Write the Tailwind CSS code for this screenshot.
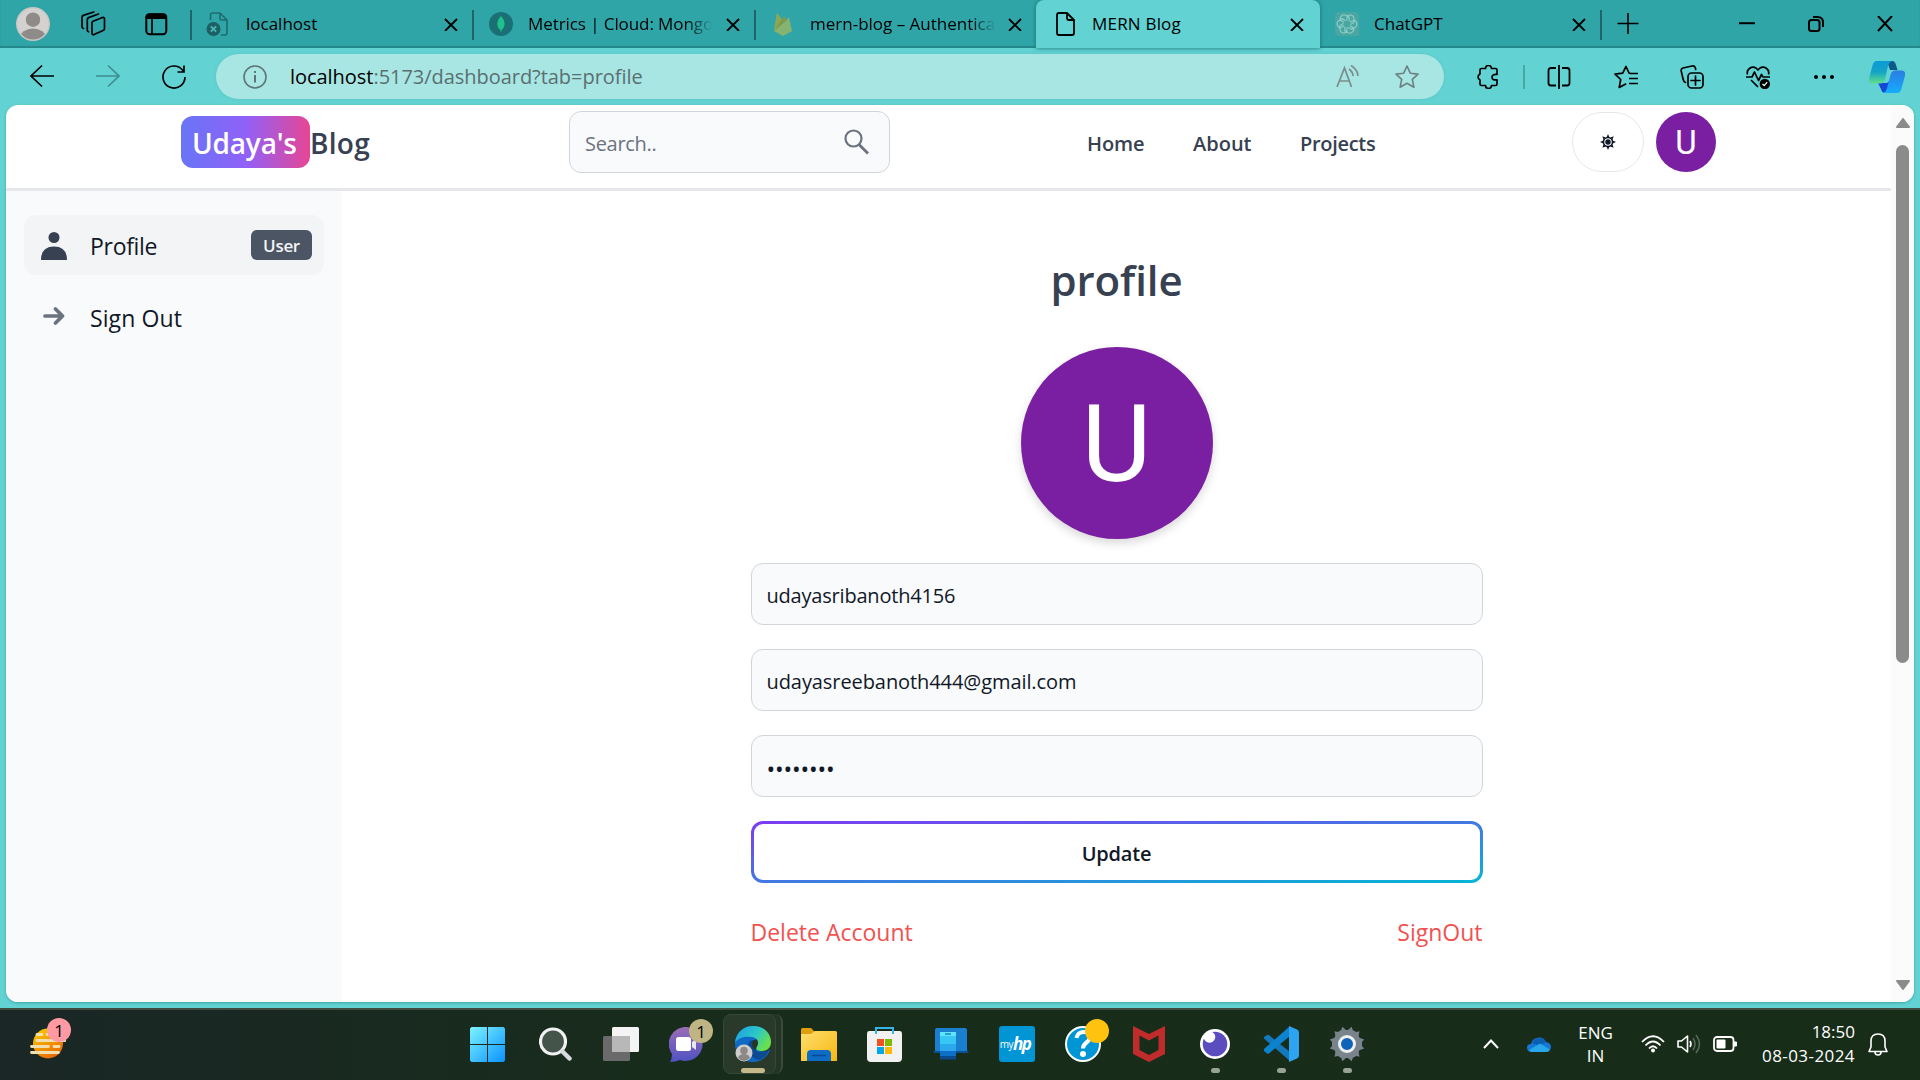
<!DOCTYPE html>
<html lang="en">
<head>
<meta charset="utf-8">
<title>MERN Blog</title>
<script src="https://cdn.jsdelivr.net/npm/@tailwindcss/browser@4"></script>
</head>
<body class="w-[1920px] h-[1080px] overflow-hidden flex flex-col bg-[#62d2d2] font-['Open_Sans',sans-serif] text-black">

<!-- Tab strip -->
<header class="relative h-12 shrink-0 flex items-center bg-[#30a5a8] shadow-[inset_0_-2px_1px_#25888b]">
  <div class="w-[191px] flex items-center pl-4">
    <svg class="w-[34px] h-[34px]" viewBox="0 0 34 34"><defs><clipPath id="av"><circle cx="17" cy="17" r="15.5"/></clipPath></defs><circle cx="17" cy="17" r="17" fill="#c9c7c5"/><circle cx="17" cy="17" r="15.5" fill="#d4d2d0"/><g clip-path="url(#av)" fill="#8e8b88"><circle cx="17" cy="12.7" r="7.2"/><ellipse cx="17" cy="31" rx="13" ry="9.5"/></g></svg>
    <svg class="w-[26px] h-[26px] ml-[30px]" viewBox="0 0 26 26" fill="none" stroke="#000" stroke-width="1.7" stroke-linejoin="round" stroke-linecap="round"><path d="M13 10.300 22.500 6.500c1.200-.4 2 .2 2 1.300v9.700c0 1-.5 1.600-1.400 2L14 23.600c-1.200.4-2-.2-2-1.300V11.800c0-.8.300-1.200 1-1.500Z"/><path d="M8.500 20.800c-.8-.2-1.200-.8-1.200-1.700V8.500c0-1 .4-1.500 1.300-1.900L18.500 3"/><path d="M3.400 17.500C2.500 17.200 2 16.600 2 15.700V6.300c0-1 .4-1.500 1.300-1.900L13.800 1"/></svg>
    <svg class="w-[24px] h-[24px] ml-[38px]" viewBox="0 0 24 24"><rect x="2.300" y="2.300" width="20" height="20" rx="3.500" fill="none" stroke="#000" stroke-width="2"/><path d="M1.500 7V5Q1.500 1.500 5 1.500h14.500q3.500 0 3.500 3.500v2Z"/><path d="M8 7v15" stroke="#000" stroke-width="1.700"/></svg>
  </div>

  <div class="w-[282px] h-full flex items-center relative">
    <i class="absolute left-[-1px] top-2.5 w-0.5 h-[30px] bg-[#1d6568]"></i>
    <svg class="w-6 h-6 ml-[15px]" viewBox="0 0 24 24" fill="none" stroke="#1c6c6e" stroke-width="1.6" stroke-linejoin="round"><path d="M4.500 8V3q0-2 2-2H14l7 7v13q0 2-2 2h-4M14 1v5q0 2 2 2h5"/><circle cx="7.500" cy="17" r="7" fill="#1c6063" stroke="none"/><path d="m4.800 14.300 5.400 5.400m0-5.400-5.400 5.400" stroke="#4cb8ba" stroke-width="1.800"/></svg>
    <span class="ml-4 w-[182px] overflow-hidden whitespace-nowrap text-[17px]">localhost</span>
    <svg class="w-3.5 h-3.5 ml-[16px]" viewBox="0 0 14 14"><path d="m1 2 12 12M13 2 1 14" stroke="#000" stroke-width="1.800"/></svg>
  </div>
  <div class="w-[282px] h-full flex items-center relative">
    <i class="absolute left-[-1px] top-2.5 w-0.5 h-[30px] bg-[#1d6568]"></i>
    <svg class="w-6 h-6 ml-4" viewBox="0 0 24 24"><circle cx="12" cy="12" r="12" fill="#1b7076"/><path d="M12 4c4.500 5 5 10.500.4 14.300V20h-.8v-1.700C7 14.500 7.500 9 12 4Z" fill="#1fc28a"/></svg>
    <span class="ml-[15px] w-[184px] overflow-hidden whitespace-nowrap text-[17px] tracking-[-.08px] mask-r-from-86% mask-r-to-100%">Metrics | Cloud: Mongo</span>
    <svg class="w-3.5 h-3.5 ml-[14px]" viewBox="0 0 14 14"><path d="m1 2 12 12M13 2 1 14" stroke="#000" stroke-width="1.800"/></svg>
  </div>
  <div class="w-[282px] h-full flex items-center relative">
    <i class="absolute left-[-1px] top-2.5 w-0.5 h-[30px] bg-[#1d6568]"></i>
    <svg class="w-6 h-6 ml-4" viewBox="0 0 24 24"><path d="M3 19 6 1l5 7 2-4 2 4 3-2.500L21 19l-9 5Z" fill="#86b36f"/><path d="M3 19 6 1l4.500 8Z" fill="#8ea551"/><path d="M3 19 13 4l2.500 4.500Z" fill="#7a9a50"/></svg>
    <span class="ml-[15px] w-[186px] overflow-hidden whitespace-nowrap text-[17px] mask-r-from-86% mask-r-to-100%">mern-blog – Authentica</span>
    <svg class="w-3.5 h-3.5 ml-[12px]" viewBox="0 0 14 14"><path d="m1 2 12 12M13 2 1 14" stroke="#000" stroke-width="1.800"/></svg>
  </div>
  <div class="w-[284px] -ml-px h-full flex items-center bg-[#62d2d2] rounded-t-lg shadow-[0_0_4px_#176d70]">
    <svg class="w-6 h-6 ml-[17px]" viewBox="0 0 24 24" fill="none" stroke="#000" stroke-width="1.800" stroke-linejoin="round"><path d="M14 1H6Q4 1 4 3v18q0 2 2 2h13q2 0 2-2V8ZM14 1v5q0 2 2 2h5"/></svg>
    <span class="ml-[15px] w-[182px] overflow-hidden whitespace-nowrap text-[17px] tracking-[.2px]">MERN Blog</span>
    <svg class="w-3.5 h-3.5 ml-[16px]" viewBox="0 0 14 14"><path d="m1 2 12 12M13 2 1 14" stroke="#000" stroke-width="1.800"/></svg>
  </div>
  <div class="w-[281px] h-full flex items-center">
    <svg class="w-6 h-6 ml-[15px]" viewBox="0 0 24 24"><path d="M4 0h16q4 0 4 4v20H4q-4 0-4-4V4q0-4 4-4Z" fill="#4aa6a0"/><g fill="none" stroke="#8fcfcd" stroke-width="1.100"><path id="pt" d="M12 8.500V6q0-3 3-3 3.500 0 4 3.500v4l-3.500 2"/><use href="#pt" transform="rotate(60 12 12)"/><use href="#pt" transform="rotate(120 12 12)"/><use href="#pt" transform="rotate(180 12 12)"/><use href="#pt" transform="rotate(240 12 12)"/><use href="#pt" transform="rotate(300 12 12)"/></g></svg>
    <span class="ml-[15px] w-[182px] overflow-hidden whitespace-nowrap text-[17px]">ChatGPT</span>
    <svg class="w-3.5 h-3.5 ml-[16px]" viewBox="0 0 14 14"><path d="m1 2 12 12M13 2 1 14" stroke="#000" stroke-width="1.800"/></svg>
  </div>
  <div class="relative flex-1 h-full flex items-center">
    <i class="absolute left-[-1px] top-2.5 w-0.5 h-[30px] bg-[#1d6568]"></i>
    <svg class="w-[22px] h-[22px] ml-[16px]" viewBox="0 0 22 22"><path d="M11 0v21M.5 10.500h21" stroke="#000" stroke-width="1.600"/></svg>
    <svg class="w-4 h-4 ml-[100px]" viewBox="0 0 16 16"><path d="M0 7.200h16" stroke="#000" stroke-width="2"/></svg>
    <svg class="w-4 h-4 ml-[53px]" viewBox="0 0 16 16" fill="none" stroke="#000" stroke-width="2"><rect x="1" y="4" width="10.500" height="11" rx="2.500"/><path d="M5 1h4.500Q15 1 15 6.500V11"/></svg>
    <svg class="w-4 h-4 ml-[53px]" viewBox="0 0 16 16"><path d="m1 0 14 15M15 0 1 15" stroke="#000" stroke-width="2"/></svg>
  </div>
</header>

<!-- Address bar row -->
<nav class="h-[57px] shrink-0 flex items-center">
  <svg class="w-6 h-6 ml-[30px] -mt-0.5" viewBox="0 0 24 24" fill="none" stroke="#000" stroke-width="1.700"><path d="M24 12H1M12 1.500 1 12l11 10.500"/></svg>
  <svg class="w-6 h-6 ml-[42px] -mt-0.5" viewBox="0 0 24 24" fill="none" stroke="#3d8f90" stroke-width="1.700"><path d="M0 12h23M12 1.500 23 12 12 22.500"/></svg>
  <svg class="w-6 h-6 ml-[42px]" viewBox="0 0 24 24" fill="none" stroke="#000" stroke-width="1.700"><path d="M23 12A11 11 0 1 1 20.500 5L22 7M22 .5V7h-6.500"/></svg>
  <div class="ml-[30px] w-[1228px] h-[45px] rounded-full bg-[#a8e6e4] flex items-center pl-[27px] shadow-[0_0_3px_#5cc4c4]">
    <svg class="w-6 h-6" viewBox="0 0 24 24" fill="none" stroke="#5d7575" stroke-width="1.600"><circle cx="12" cy="12" r="11"/><path d="M12 10v7.500M12 6v2" stroke-width="2"/></svg>
    <span class="ml-[23px] w-[1046px] whitespace-nowrap text-[20px] tracking-[-.04px]">localhost<span class="text-[#5a6f70]">:5173/dashboard?tab=profile</span></span>
    <svg class="w-6 h-6" viewBox="0 0 24 24" fill="none" stroke="#7a8d8d" stroke-width="1.700"><path d="M1 22 8.500 3l7 19M3.500 16h10M13 4q4 3 4 7M15 .500q6.500 4 7 10.500"/></svg>
    <svg class="w-6 h-6 ml-[35px]" viewBox="0 0 24 24" fill="none" stroke="#6b8080" stroke-width="1.600" stroke-linejoin="round"><path d="m12 1 3.300 7.200 7.700.9-5.700 5.300 1.600 7.800L12 18.200l-6.900 4 1.600-7.800L1 9.100l7.700-.9Z"/></svg>
  </div>
  <svg class="w-6 h-6 ml-[32px]" viewBox="0 0 24 24" fill="none" stroke="#000" stroke-width="1.700" stroke-linejoin="round"><path d="M4 5q0-1.500 1.500-1.500h4a3 3 0 0 1 6 0H19.500q1.500 0 1.500 1.500v4.500q-5-.5-5 2.700t5 2.700V19q0 1.500-1.500 1.500h-4a3 3 0 0 1-6 0h-4Q4 20.500 4 19v-4a3.300 3.300 0 0 1 0-6Z"/></svg>
  <i class="ml-[23px] w-0.5 h-6 bg-[#4da5a5]"></i>
  <svg class="w-6 h-6 ml-[22px]" viewBox="0 0 24 24" fill="none" stroke="#000" stroke-width="1.800"><path d="M9 3H4Q1.500 3 1.500 5.500v12.500Q1.500 20.500 4 20.500h5M15 3h5q2.500 0 2.500 2.500v12.500q0 2.500-2.500 2.500h-5M12 0v24"/></svg>
  <svg class="w-6 h-6 ml-[43px]" viewBox="0 0 24 24" fill="none" stroke="#000" stroke-width="1.700" stroke-linejoin="round"><path d="M16.500 8.500 15 8l-3-6.500-3.300 6.700-7.700 1 5.700 5.300L5.200 22.500l7-3.700M16 8.500h8M15 13.500h9M15 18.500h9"/></svg>
  <svg class="w-6 h-6 ml-[42px]" viewBox="0 0 24 24" fill="none" stroke="#000" stroke-width="1.700" stroke-linecap="round"><rect x="8" y="8" width="15" height="15" rx="3.500"/><path d="M15.500 11v9M11 15.500h9M5.500 17.500C4 17 3.500 16 3.200 14.500L1.200 6Q.8 3.500 3 3l9-2q2.500-.5 3.200 1.500l.5 2"/></svg>
  <svg class="w-6 h-6 ml-[42px]" viewBox="0 0 24 24" fill="none" stroke="#000" stroke-width="1.700" stroke-linejoin="round"><path d="M1.500 9.500C0 4 6 .5 10 3l2 2 2-2c4-2.500 10 1 8.500 6.500M0 12h6l2.500-5 4 8.500 3-6 1.500 2.500h7M5 15l7 7"/><circle cx="18.800" cy="19" r="5.200" fill="#000" stroke="none"/><path d="m16.500 19 1.700 1.700 3-3.500" stroke="#fff" stroke-width="1.200"/></svg>
  <svg class="w-5 h-6 ml-[44px]" viewBox="0 0 20 24"><circle cx="2" cy="12" r="2"/><circle cx="10" cy="12" r="2"/><circle cx="18" cy="12" r="2"/></svg>
  <svg class="w-9 h-8 ml-[35px]" viewBox="0 0 36 32"><defs><linearGradient id="cp1" x2="0" y2="1"><stop stop-color="#0a9ad8"/><stop offset=".5" stop-color="#14a5c4"/><stop offset="1" stop-color="#5fe08a"/></linearGradient><linearGradient id="cp2" x2="0" y2="1"><stop stop-color="#2c7be0"/><stop offset="1" stop-color="#14aeff"/></linearGradient></defs><path d="M18 0h5q3 0 4 4l1.500 5H21Z" fill="#0b5b86"/><path d="M9 22h9l5-4-2 9q-1 5-5 5-3 0-4-4Z" fill="#1747d8"/><path d="M8 0h15q-3 1-4 5l-3 13q-1 4.500-5 4.500H4q-5 0-4-5L3.500 4.500Q4.500 0 8 0Z" fill="url(#cp1)"/><path d="M28 32H14q3-1 4-5l3.500-13q1-4.500 5-4.500H32q5 0 4 5l-3.500 13q-1 4.500-4.500 4.500Z" fill="url(#cp2)"/></svg>
</nav>

<!-- Page viewport -->
<main class="mx-1.5 h-[897px] shrink-0 flex rounded-xl overflow-hidden bg-white shadow-[0_1px_3px_#3fa5a5]">
  <div class="w-[1885px] flex flex-col">
    <div class="h-[86px] shrink-0 border-b-[3px] border-[#e5e7eb] flex items-start pt-1.5">
      <div class="ml-[175px] w-[388px] mt-[5px] flex items-center text-[28px] font-semibold whitespace-nowrap text-[#374151]">
        <span class="w-[129px] h-[52px] -mt-0.5 pl-[11px] leading-[54px] tracking-[-.2px] rounded-xl bg-linear-to-r/srgb from-[#6875f5] via-[#9061f9] to-[#e74694] text-white">Udaya's</span><span class="leading-[54px] tracking-[.3px]">Blog</span>
      </div>
      <div class="w-[321px] h-[62px] rounded-xl border-[1.5px] border-[#d1d5db] bg-[#f9fafb] flex items-center pl-[15px] text-[20px] text-[#6b7280]">
        <span class="w-[259px] pt-[3px] tracking-[-.3px]">Search..</span>
        <svg class="w-[26px] h-[26px]" viewBox="0 0 26 26" fill="none" stroke="#6b7280" stroke-width="2.200"><circle cx="9.500" cy="9.500" r="8"/><path d="m15 15.500 9 9" stroke-width="2.800"/></svg>
      </div>
      <div class="flex ml-[197px] w-[485px] h-[62px] items-center gap-12 pt-1 text-[20px] font-semibold text-[#374151]">
        <span class="w-[58px] tracking-[-.1px]">Home</span><span class="w-[59px]">About</span><span class="tracking-[-.3px]">Projects</span>
      </div>
      <div class="mt-px w-[72px] h-[60px] rounded-full border-[1.5px] border-[#e5e7eb] flex items-center justify-center">
        <svg class="w-4 h-4" viewBox="0 0 17 17"><circle cx="8.500" cy="8.500" r="4.800" fill="none" stroke="#111827" stroke-width="1.700"/><circle cx="8.500" cy="8.500" r="2.900" fill="#111827"/><path d="M8.500 0 10 3.500H7ZM8.500 17 7 13.500h3ZM0 8.500 3.500 7v3ZM17 8.500 13.500 10V7ZM2.500 2.500 6 3.800 3.800 6ZM14.500 2.500 13.200 6 11 3.800ZM2.500 14.500 3.800 11 6 13.200ZM14.500 14.500 11 13.200 13.200 11Z" fill="#111827"/></svg>
      </div>
      <div class="mt-px ml-3 w-[60px] h-[60px] rounded-full bg-[#7b1fa2] flex items-center justify-center pt-px text-white font-[Roboto] text-[33px]">U</div>
    </div>

    <div class="flex-1 flex">
      <aside class="w-[336px] bg-[#f9fafc] rounded-tr px-[18px] pt-6 flex flex-col gap-3 text-[23px] text-[#111827]">
        <div class="w-[300px] h-[60px] rounded-xl bg-[#f3f4f6] flex items-center pl-[17px] pr-3">
          <svg class="w-[26px] h-[28px] mt-px" viewBox="0 0 26 28" fill="#374151"><circle cx="13" cy="5.500" r="5.500"/><path d="M0 28Q0 14.500 13 14.500T26 28Z"/></svg>
          <span class="ml-[23px] flex-1 pt-0.5 tracking-[-.3px]">Profile</span>
          <span class="w-[61px] h-[30px] leading-[31px] rounded-md bg-[#4b5563] text-[17px] font-semibold text-[#f3f4f6] text-center tracking-[-.3px]">User</span>
        </div>
        <div class="w-[300px] h-[60px] flex items-center pl-[19px]">
          <svg class="w-[22px] h-[20px] -mt-0.5" viewBox="0 0 22 20" fill="none" stroke="#6b7280" stroke-width="3.700" stroke-linecap="round" stroke-linejoin="round"><path d="M2 10h17M12.500 3l7 7-7 7"/></svg>
          <span class="ml-[25px] pt-0.5 tracking-[.1px]">Sign Out</span>
        </div>
      </aside>
      <section class="flex-1 flex flex-col items-center">
        <div class="w-[732px] flex flex-col items-center">
          <h1 class="mt-[61px] h-[57px] leading-[56px] text-[42px] font-semibold tracking-[-.1px] text-[#374151]">profile</h1>
          <div class="mt-[38px] w-48 h-48 rounded-full bg-[#7b1fa2] shadow-[0_4px_10px_#00000028] flex items-center justify-center pt-0.5 text-white font-[Roboto] text-[107px] leading-none">U</div>
          <div class="mt-6 w-full h-[62px] rounded-xl border-[1.5px] border-[#d1d5db] bg-[#f9fafc] flex items-center pl-[15px] pt-1 text-[20px] tracking-[-.2px] text-[#111827]">udayasribanoth4156</div>
          <div class="mt-6 w-full h-[62px] rounded-xl border-[1.5px] border-[#d1d5db] bg-[#f9fafc] flex items-center pl-[15px] pt-1 text-[20px] tracking-[-.08px] text-[#111827]">udayasreebanoth444@gmail.com</div>
          <div class="mt-6 w-full h-[62px] rounded-xl border-[1.5px] border-[#d1d5db] bg-[#f9fafc] flex items-center pl-[15px] pt-1.5 text-[23px] tracking-[-.13px] text-[#111827]">••••••••</div>
          <div class="mt-6 w-full h-[62px] rounded-xl p-[3px] bg-linear-to-br/srgb from-[#7e3af2] to-[#06b6d4]">
            <div class="w-full h-full rounded-[9px] bg-white flex items-center justify-center pt-1 text-[20px] font-semibold tracking-[-.2px] text-[#111827]">Update</div>
          </div>
          <div class="mt-[31px] w-full flex justify-between text-[23px] leading-9 text-[#f05252]"><span>Delete Account</span><span>SignOut</span></div>
        </div>
      </section>
    </div>
  </div>
  <!-- Scrollbar -->
  <div class="flex-1 bg-[#fbfbfc] flex flex-col items-center pt-[13px]">
    <svg class="w-3.5 h-2.5" viewBox="0 0 14 10"><path d="M7 1 13 9H1Z" fill="#8b8b8b" stroke="#8b8b8b" stroke-width="2" stroke-linejoin="round"/></svg>
    <i class="mt-[17px] w-[13px] h-[518px] rounded-full bg-[#8b8b8b]"></i>
    <svg class="mt-[317px] w-3.5 h-2.5" viewBox="0 0 14 10"><path d="M7 9 13 1H1Z" fill="#8b8b8b" stroke="#8b8b8b" stroke-width="2" stroke-linejoin="round"/></svg>
  </div>
</main>
<div class="h-1.5 shrink-0"></div>

<!-- Taskbar -->
<footer class="h-[72px] shrink-0 border-t-2 border-[#404c40] pb-0.5 bg-linear-to-r from-[#1a2726] via-[#182c1b] via-35% to-[#182d18] flex items-center text-white text-[17px]">
  <div class="relative ml-[30px] w-[440px] h-full flex items-center">
    <svg class="w-9 h-8" viewBox="0 0 36 32"><defs><linearGradient id="wx" x2=".6" y2="1"><stop stop-color="#ffd400"/><stop offset="1" stop-color="#e86a00"/></linearGradient></defs><circle cx="18" cy="15.500" r="15" fill="url(#wx)"/><path d="M7 6.500h5M17 6.500h8M7 12.500h28M1.500 18.500h17M24 18.500h5M1.500 24.500h27" stroke="#f2dfb0" stroke-width="2.800" stroke-linecap="round"/></svg>
    <span class="absolute left-[17px] top-[8px] w-6 h-6 rounded-full bg-[#ff9aa2] text-black text-center leading-[25px] text-[17px]">1</span>
  </div>
  <svg class="w-[35px] h-[35px]" viewBox="0 0 35 35"><defs><linearGradient id="wn" x2="1" y2="1"><stop stop-color="#7df3ff"/><stop offset="1" stop-color="#0a92ff"/></linearGradient></defs><path d="M1.500 0H17v17H0V1.500ZM18 0h15.500L35 1.500V17H18ZM0 18h17v17H1.500L0 33.500ZM18 18h17v15.500L33.500 35H18Z" fill="url(#wn)"/></svg>
  <svg class="w-[33px] h-[34px] ml-[34px]" viewBox="0 0 33 34"><circle cx="14" cy="14.500" r="12.500" fill="#44544a" stroke="#f2f2f4" stroke-width="3.200"/><path d="m23.500 24.500 7 7" stroke="#d9d9e0" stroke-width="4.500" stroke-linecap="round"/></svg>
  <svg class="w-9 h-[34px] ml-[31px]" viewBox="0 0 36 34"><rect x="9" y="0" width="27" height="25" rx="1.500" fill="#f4f4f4"/><rect y="9" width="27" height="25" rx="1.500" fill="#6a6a6a"/><path d="M9 9h18v16H9Z" fill="#b8b8b8"/></svg>
  <div class="relative ml-[30px] w-[54px] h-full flex items-center">
    <svg class="w-[35px] h-[35px]" viewBox="0 0 35 35"><defs><linearGradient id="tm" x2="0" y2="1"><stop stop-color="#9b6cb4"/><stop offset="1" stop-color="#4f52c4"/></linearGradient></defs><path d="M18 0a17 17 0 1 1-7 33q-5 2-10 2 2-3 2-8A17 17 0 0 1 18 0Z" fill="url(#tm)"/><rect x="7" y="10" width="15" height="14" rx="2.500" fill="#fff"/><path d="m23 15 4-3v11l-4-3Z" fill="#e8e8f4"/></svg>
    <span class="absolute left-5 top-[9px] w-6 h-6 rounded-full bg-[#bfb483] text-black text-center leading-[25px] text-[17px]">1</span>
  </div>
  <div class="relative w-[60px] h-[60px] rounded-lg border-r-2 border-[#3b4a3b] bg-[#233524]">
    <i class="absolute left-0 top-0 w-[53px] h-[60px] rounded-lg border-[1.5px] border-[#364836] bg-[#293a2a]"></i>
    <svg class="absolute left-3 top-3 w-9 h-9" viewBox="0 0 36 36"><defs><linearGradient id="eg1" x2="1" y2=".5"><stop stop-color="#1c9be8"/><stop offset=".6" stop-color="#2cc8c8"/><stop offset="1" stop-color="#68e04c"/></linearGradient></defs><circle cx="18" cy="18" r="18" fill="#1069c4"/><path d="M18 18c4 9 12 9 18 5 1-4 0-9 0-9l-14-2Z" fill="#25352a"/><path d="M0 17C1 6 9 0 18 0c11 0 18 7 18 16 0 6-4 9-9 9-6 0-7-3-5-5 3-5-1-9-6-9C8 10 2 13 0 17Z" fill="url(#eg1)"/><path d="M13 20c0-4 3-6 5-6 3 2 4 4 2 6-2 3 1 6 6 6 3 0 5-1 8-2-2 5-5 8-10 10-6-1-11-6-11-14Z" fill="#0c4a92"/><path d="M17 18c0-3 2-5 4-4 2 2 2 4 1 6q-1 2-1 4-4-1-4-6Z" fill="#25352a"/><circle cx="9" cy="27" r="8.500" fill="#cfcdcb"/><circle cx="9" cy="24.500" r="3.800" fill="#8b8886"/><path d="M3 32q1-4 6-4t6 4q-6 6-12 0Z" fill="#8b8886"/></svg>
    <i class="absolute left-[18px] top-[54px] w-6 h-[5px] rounded-full bg-[#c5b98a]"></i>
  </div>
  <svg class="w-9 h-[33px] ml-[18px]" viewBox="0 0 36 33"><defs><linearGradient id="fd" x2="1" y2="1"><stop stop-color="#ffdf70"/><stop offset="1" stop-color="#f7b60f"/></linearGradient></defs><path d="M0 1.500Q0 0 1.500 0H10l4 4v4H0Z" fill="#dfa00f"/><path d="M0 6h10l4-3h20.500Q36 3 36 4.500V33H0Z" fill="url(#fd)"/><path d="M6 33v-7q0-4 4-4h16q4 0 4 4v7Z" fill="#0f6cc4"/><path d="M11 27.500h14" stroke="#0a4a92" stroke-width="1.500"/></svg>
  <svg class="w-[35px] h-[35px] ml-[30px]" viewBox="0 0 35 35"><path d="M9 7V1h17v6" fill="none" stroke="#35b4e8" stroke-width="2"/><path d="M0 6.500Q0 4 2 4h31q2 0 2 2.500V31q0 4-4 4H4q-4 0-4-4Z" fill="#f1f1f1"/><path d="M9 4v3M26 4v3" stroke="#35b4e8" stroke-width="2"/><path d="M10 12h7v7h-7Z" fill="#f25022"/><path d="M18 12h7v7h-7Z" fill="#7fba00"/><path d="M10 20h7v7h-7Z" fill="#00a4ef"/><path d="M18 20h7v7h-7Z" fill="#ffb900"/></svg>
  <svg class="w-9 h-8 ml-[31px]" viewBox="0 0 36 32"><path d="M2 2q0-2 2-2h28q2 0 2 2v22H2Z" fill="#1b7fd0"/><path d="M0 23h36l-1.500 2h-33Z" fill="#0b4f94"/><path d="M7 4h16v12H7Z" fill="#38c6f4"/><path d="M7 4h16v4H7Z" fill="#5fe4fb"/><path d="M7 16h16v7H7Z" fill="#2ca8ec"/><path d="M7 23h16v5H7Z" fill="#0c70c8"/><path d="M7 28h16v3.500H7Z" fill="#0a4a8c"/><path d="M12 6h6" stroke="#1687c8" stroke-width="1.500"/></svg>
  <div class="ml-[30px] w-9 h-9 rounded-[3px] bg-[#0096d6] flex items-center justify-center italic whitespace-nowrap leading-none"><span class="text-[10px] not-italic tracking-[-.5px]">my</span><span class="text-[17px] font-bold tracking-[-1.500px] -mt-0.5 mr-1">hp</span></div>
  <div class="relative ml-[30px] w-[66px] h-full flex items-center">
    <svg class="w-9 h-9" viewBox="0 0 36 36"><circle cx="18" cy="18" r="17" fill="#0096d6" stroke="#fff" stroke-width="2"/><path d="M11.500 12q1-6 7.500-6 6 0 6 5 0 3-3.500 5.500T18 22.500" fill="none" stroke="#fff" stroke-width="4"/><circle cx="18" cy="28" r="3" fill="#fff"/></svg>
    <i class="absolute left-5 top-[9px] w-6 h-6 rounded-full bg-[#ffc20e]"></i>
  </div>
  <svg class="w-8 h-9 ml-[2px]" viewBox="0 0 32 36"><path d="M0 0 16 8 32 0v28l-16 8L0 28Z" fill="#c02b2b"/><path d="M6.500 9.500 16 14.500l9.500-5V24L16 29l-9.500-5Z" fill="#182c1a"/></svg>
  <div class="relative ml-[35px] w-[30px] h-full flex items-center"><svg class="w-[30px] h-[32px]" viewBox="0 0 30 32"><circle cx="15" cy="16" r="15" fill="#fff"/><circle cx="15" cy="16" r="12.300" fill="#5b4cc0"/><circle cx="9.500" cy="9" r="5.800" fill="#fff"/></svg><i class="absolute left-[11px] top-[58px] w-[9px] h-[5px] rounded-full bg-[#98a398]"></i></div>
  <div class="relative ml-[33px] w-9 h-full flex items-center"><svg class="w-9 h-9" viewBox="0 0 36 36"><path d="M1 11 4 9q1.500-.5 2.500.5L27 26v9L1.500 13Q.5 12 1 11Z" fill="#1478bd"/><path d="M1 25 4 27.500q1.500.5 2.500-.5L27 10V0L1.500 22.500q-1 1-.5 2.500Z" fill="#0c83cf"/><path d="M26 0 34 3.500q2 1 2 3v23q0 2-2 3L26 36Z" fill="#2ea3ef"/></svg><i class="absolute left-[14px] top-[58px] w-[9px] h-[5px] rounded-full bg-[#98a398]"></i></div>
  <div class="relative ml-[30px] w-9 h-full flex items-center"><svg class="w-9 h-9" viewBox="0 0 36 36"><g fill="#79838c"><path id="gt" d="M11 8 13.500.8 16 3h4L22.500.8 25 8v20l-2.500 7.200L20 33h-4l-2.500 2.200L11 28Z" transform="rotate(30 18 18)"/><use href="#gt" transform="rotate(60 18 18)"/><use href="#gt" transform="rotate(120 18 18)"/><circle cx="18" cy="18" r="14"/></g><circle cx="18" cy="18" r="7.500" fill="#1064b8" stroke="#f0f0f0" stroke-width="3"/></svg><i class="absolute left-[14px] top-[58px] w-[9px] h-[5px] rounded-full bg-[#98a398]"></i></div>

  <svg class="w-4 h-2.5 ml-[118px]" viewBox="0 0 16 10" fill="none" stroke="#fff" stroke-width="2"><path d="m1 9 7-7.500L15 9"/></svg>
  <svg class="w-6 h-4 ml-7" viewBox="0 0 24 16"><path d="M4 8a8 8 0 0 1 15-2q5 1 5 5t-5 5H5q-5 0-5-4.500Q0 8 4 8Z" fill="#1478d4"/><path d="M5 7a8 8 0 0 1 14-1l-7 4Z" fill="#0a5fb4"/><path d="M2 14 13 7.500l10 6Q22 16 19 16H5q-2 0-3-2Z" fill="#28a8ea"/></svg>
  <div class="ml-[27px] w-[35px] text-center leading-[23px]"><div>ENG</div><div>IN</div></div>
  <svg class="w-6 h-[18px] ml-[28px]" viewBox="0 0 24 18" fill="none" stroke="#fff" stroke-width="1.800"><path d="M1 7Q12-4.500 23 7M4.500 10.500q7.500-8 15 0M8 13.500q4-4.500 8 0"/><circle cx="12" cy="15.500" r="2" fill="#fff" stroke="none"/></svg>
  <svg class="w-6 h-5 ml-3" viewBox="0 0 24 20" fill="none" stroke="#fff" stroke-width="1.600" stroke-linejoin="round"><path d="M1 7h3.500L10.500 2v16L4.500 13H1ZM13 7q2 3 0 6"/><path d="M16 4q4 6 0 12M19 1q7 9 0 18" stroke="#566856"/></svg>
  <svg class="w-6 h-4 ml-3" viewBox="0 0 24 16"><rect x="1" y="1" width="19.500" height="14" rx="3" fill="none" stroke="#fff" stroke-width="1.800"/><rect x="3.500" y="3.500" width="9" height="9" rx="1" fill="#fff"/><path d="M21 5.500h2q1 0 1 1v3q0 1-1 1h-2Z" fill="#fff"/></svg>
  <div class="ml-[15px] w-[103px] text-right leading-6 pb-px"><div>18:50</div><div class="tracking-[.43px]">08-03-2024</div></div>
  <svg class="w-5 h-[23px] ml-[13px]" viewBox="0 0 20 23" fill="none" stroke="#fff" stroke-width="1.600" stroke-linejoin="round"><path d="M10 1q7 0 7 7v6l2 4.500H1L3 14V8q0-7 7-7ZM7 19q0 3 3 3t3-3"/></svg>
</footer>
</body>
</html>
